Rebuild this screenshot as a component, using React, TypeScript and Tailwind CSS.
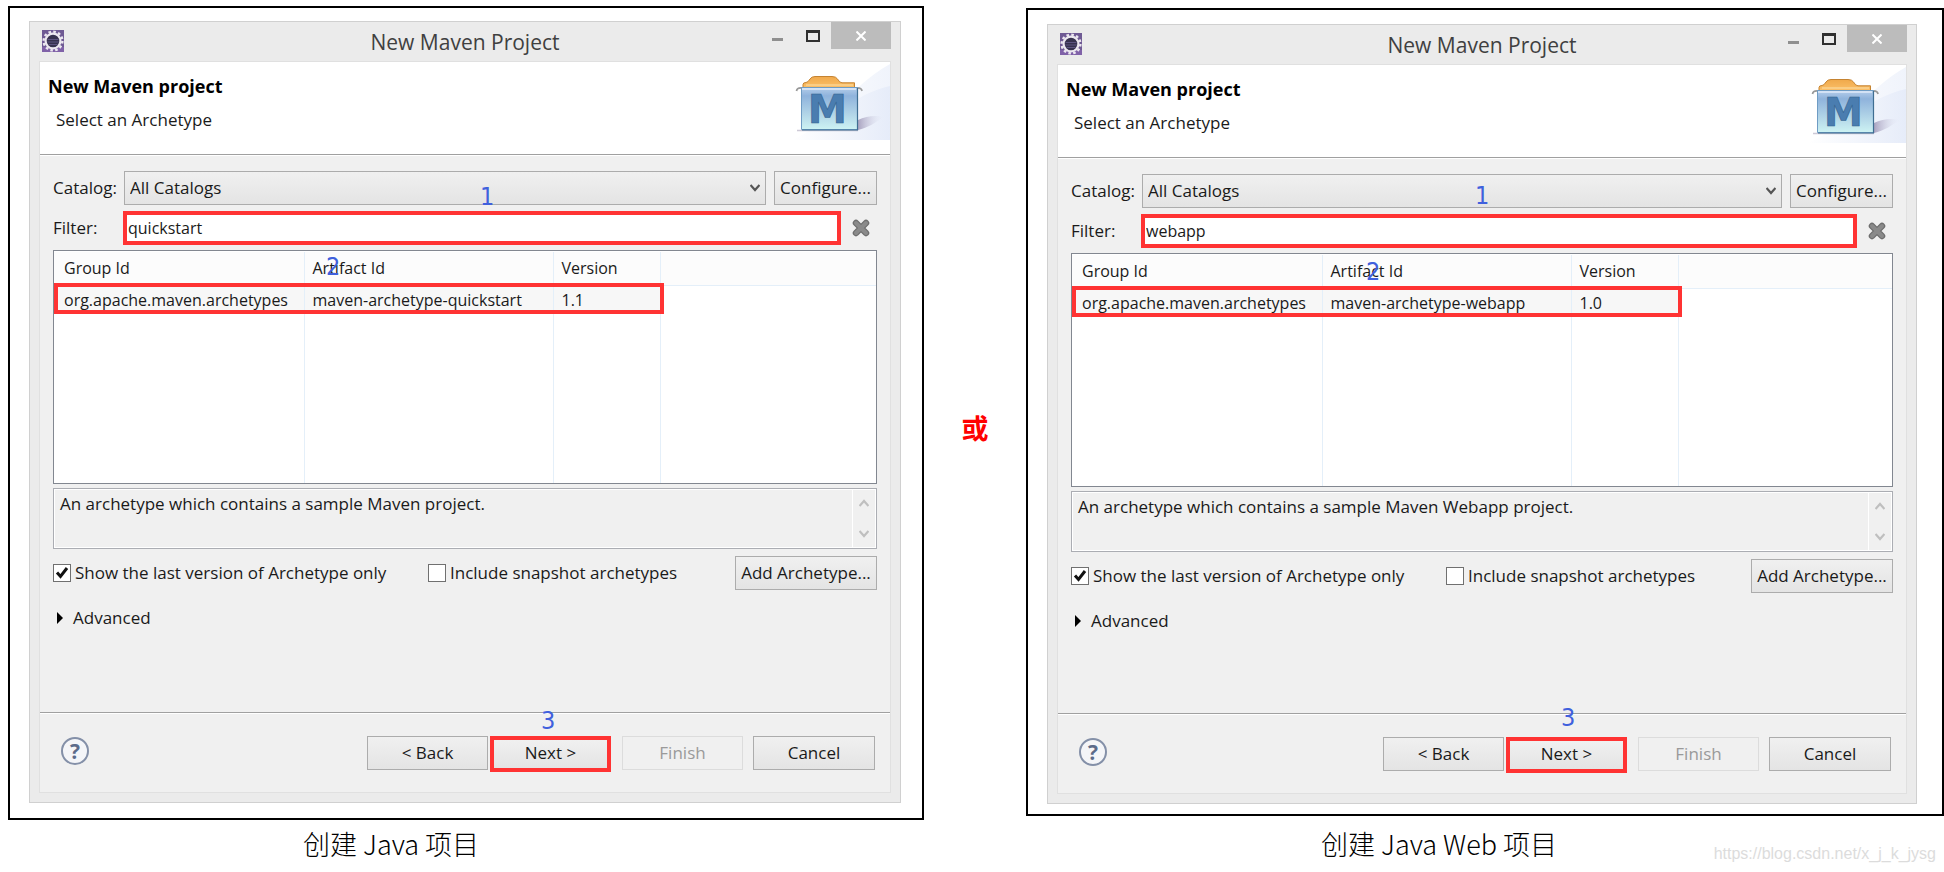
import React, { useState } from 'react';
import clsx from 'clsx';

interface Marker {
  label: string;
  place: string;
}

interface WizardProps {
  id: string;
  filter: string;
  artifactId: string;
  version: string;
  description: string;
  height: string;
  markers: Marker[];
}

const buttonClass =
  'h-[34px] border border-[#acacac] bg-linear-to-b from-[#f0f0f0] to-[#e4e4e4] text-center whitespace-nowrap';

const EclipseIcon = () => (
  <svg className="h-[22px] w-[22px]" viewBox="0 0 22 22" aria-hidden="true">
    <rect width="22" height="22" fill="#6f5a94" />
    <rect y="17" width="22" height="5" fill="#8062a8" />
    <circle cx="11" cy="11" r="9.4" fill="none" stroke="#ece8f0" strokeWidth="2.4" strokeDasharray="2.6 2.32" />
    <circle cx="11" cy="11" r="7.4" fill="#37324f" stroke="#ece8f0" strokeWidth="2.2" />
    <path d="M5.500 9.500h11M5.200 12h11.600M6.500 14.500h9" stroke="#5d5480" strokeWidth="1.200" />
  </svg>
);

const MavenBanner = ({ id }: { id: string }) => (
  <svg className="h-[78px] w-[98px] shrink-0" viewBox="0 0 98 78" aria-hidden="true">
    <defs>
      <linearGradient id={`${id}-sky`} x1="0" y1="0" x2="1" y2="0">
        <stop offset="0" stopColor="#ffffff" />
        <stop offset="1" stopColor="#e6ecf9" />
      </linearGradient>
      <linearGradient id={`${id}-box`} x1="0" y1="0" x2="0" y2="1">
        <stop offset="0" stopColor="#b4cdea" />
        <stop offset="0.2" stopColor="#8fb3dc" />
        <stop offset="0.65" stopColor="#b3d6e8" />
        <stop offset="1" stopColor="#cdf3f3" />
      </linearGradient>
      <linearGradient id={`${id}-tab`} x1="0" y1="0" x2="0" y2="1">
        <stop offset="0" stopColor="#f0a94b" />
        <stop offset="1" stopColor="#fbc069" />
      </linearGradient>
      <linearGradient id={`${id}-shade`} x1="0" y1="0" x2="1" y2="0">
        <stop offset="0" stopColor="#a9a3c0" />
        <stop offset="1" stopColor="#e6eaf7" stopOpacity="0" />
      </linearGradient>
    </defs>
    <path d="M0 78C40 66 54 26 98 2v76z" fill={`url(#${id}-sky)`} opacity="0.6" />
    <path d="M0 78C40 60 60 32 98 24v54z" fill={`url(#${id}-sky)`} />
    <path d="M66 58C74 54 84 53 92 55C84 60 76 66 66 68z" fill={`url(#${id}-shade)`} />
    <path d="M5 68.500h61" stroke="#b9b3c6" strokeWidth="1.500" opacity="0.7" />
    <path d="M11 26V22.500Q11 20.500 14 20.500Q16 20.500 18 17Q19.500 14.500 23 14.500H40Q44 14.500 45.500 17Q47.500 20.800 50 20.800H62.500V26z" fill={`url(#${id}-tab)`} stroke="#c58331" strokeWidth="1" />
    <path d="M14 23H61" stroke="#fde0a8" strokeWidth="1" />
    <path d="M4.500 29Q5 25.500 10 26M70 29Q69.500 25.500 64 26" fill="none" stroke="#9a9a9a" strokeWidth="1.800" />
    <path d="M9.500 25.500H65.500V67.500H9.500z" fill={`url(#${id}-box)`} stroke="#6f9cc4" strokeWidth="1" />
    <path d="M10 27H64" stroke="#dfeafa" strokeWidth="1.500" />
    <path d="M65.500 26V68H10" fill="none" stroke="#3f6e92" strokeWidth="1.200" />
    <text x="16" y="61" fontSize="39" fontWeight="700" className="font-['DejaVu_Sans']" fill="#4a7db0" stroke="#2f5f8e" strokeWidth="0.6">M</text>
  </svg>
);

const WizardDialog: React.FC<WizardProps> = ({
  id,
  filter,
  artifactId,
  version,
  description,
  height,
  markers,
}) => {
  const [query, setQuery] = useState(filter);
  const [lastOnly, setLastOnly] = useState(true);
  const [snapshots, setSnapshots] = useState(false);

  return (
    <section
      className={clsx(
        "relative flex flex-col border border-[#d0d0d0] bg-[#ebebeb] px-[9px] pb-[9px] font-['Open_Sans',sans-serif] text-[17px] leading-6 text-[#1a1a1a]",
        height
      )}
    >
      {/* Title bar */}
      <header className="grid h-[39px] shrink-0 grid-cols-[1fr_auto_1fr]">
        <div className="pt-2 pl-[3px]">
          <EclipseIcon />
        </div>
        <h1 className="text-[21px] leading-10 text-[#404040]">New Maven Project</h1>
        <div className="flex items-start justify-end">
          <button aria-label="Minimize" className="flex h-[27px] w-9 items-center justify-center pt-[8px]">
            <span className="h-[3px] w-[11px] bg-[#8f8f8f]" />
          </button>
          <button aria-label="Maximize" className="flex h-[27px] w-9 items-center justify-center">
            <span className="h-3 w-[14px] border-2 border-t-[3px] border-[#303030]" />
          </button>
          <button aria-label="Close" className="flex h-[27px] w-[60px] items-center justify-center bg-[#bcbcbc]">
            <svg className="h-[10px] w-[10px]" viewBox="0 0 10 10">
              <path d="M0.500 0.500L9.500 9.500M9.500 0.500L0.500 9.500" stroke="#fff" strokeWidth="2" />
            </svg>
          </button>
        </div>
      </header>

      <div className="flex flex-1 flex-col border border-[#e0e0e0] bg-[#f0f0f0]">
        {/* Wizard heading */}
        <div className="flex h-[93px] shrink-0 justify-between border-b border-[#a0a0a0] bg-white">
          <div className="pt-3 pl-2">
            <h2 className="text-lg leading-6 font-bold text-black">New Maven project</h2>
            <p className="mt-[10px] pl-2">Select an Archetype</p>
          </div>
          <MavenBanner id={id} />
        </div>

        {/* Archetype form */}
        <div className="flex flex-1 flex-col border-t border-white px-[13px] pt-[15px]">
          <div className="flex items-center">
            <label htmlFor={`${id}-catalog`} className="w-[71px] shrink-0">Catalog:</label>
            <div className="relative flex-1">
              <select
                id={`${id}-catalog`}
                className="h-[34px] w-full appearance-none border border-[#acacac] bg-linear-to-b from-[#f0f0f0] to-[#e4e4e4] pl-[5px]"
              >
                <option>All Catalogs</option>
              </select>
              <svg className="pointer-events-none absolute top-[13px] right-[6px] h-2 w-[10px]" viewBox="0 0 10 8">
                <path d="M0.500 1L5 6L9.500 1" fill="none" stroke="#555" strokeWidth="2.200" />
              </svg>
            </div>
            <button className={clsx(buttonClass, 'ml-2 w-[103px]')}>Configure...</button>
          </div>

          <div className="mt-[6px] flex items-center">
            <label htmlFor={`${id}-filter`} className="w-[70px] shrink-0">Filter:</label>
            <input
              id={`${id}-filter`}
              type="text"
              value={query}
              onChange={(e) => setQuery(e.target.value)}
              className="h-[34px] min-w-0 flex-1 border-4 border-[#ff3333] bg-white pl-px text-base outline-none"
            />
            <button aria-label="Clear filter" onClick={() => setQuery('')} className="flex w-9 justify-center pl-1">
              <svg className="h-[18px] w-[18px]" viewBox="0 0 18 18">
                <path d="M4 4L14 14M14 4L4 14" stroke="#6e6e6e" strokeWidth="6.500" strokeLinecap="round" />
                <path d="M4 4L14 14M14 4L4 14" stroke="#8a8a8a" strokeWidth="4" strokeLinecap="round" />
              </svg>
            </button>
          </div>

          <div className="relative mt-[5px] h-[234px] shrink-0 border border-[#828790] bg-white pt-px text-base">
            <table className="h-full w-full table-fixed border-collapse text-left">
              <colgroup>
                <col className="w-[250px]" />
                <col className="w-[249px]" />
                <col className="w-[107px]" />
                <col />
              </colgroup>
              <thead>
                <tr className="h-[33px] border-b border-[#e4eff9] bg-[#fcfcfc]">
                  <th className="border-r border-[#e4eff9] py-0 pl-[10px] font-normal">Group Id</th>
                  <th className="border-r border-[#e4eff9] py-0 pl-2 font-normal">Artifact Id</th>
                  <th className="border-r border-[#e4eff9] py-0 pl-2 font-normal">Version</th>
                  <th />
                </tr>
              </thead>
              <tbody>
                <tr className="h-[29px]">
                  <td className="border-r border-[#e4eff9] bg-[#f7f7f7] py-0 pl-[10px]">org.apache.maven.archetypes</td>
                  <td className="border-r border-[#e4eff9] bg-[#f7f7f7] py-0 pl-2">{artifactId}</td>
                  <td className="border-r border-[#e4eff9] bg-[#f7f7f7] py-0 pl-2">{version}</td>
                  <td />
                </tr>
                <tr>
                  <td className="border-r border-[#e4eff9]" />
                  <td className="border-r border-[#e4eff9]" />
                  <td className="border-r border-[#e4eff9]" />
                  <td />
                </tr>
              </tbody>
            </table>
            <div className="pointer-events-none absolute top-8 left-0 h-[31px] w-[610px] border-4 border-[#ff3333]" />
          </div>

          <div className="mt-1 flex h-[61px] shrink-0 border border-[#abadb3] p-px outline-1 -outline-offset-2 outline-white">
            <p className="flex-1 pl-[5px] leading-7">{description}</p>
            <div className="flex w-[23px] flex-col items-center justify-between border-l border-white py-[9px]">
              <svg className="h-2 w-[10px]" viewBox="0 0 10 8">
                <path d="M0.500 7L5 2L9.500 7" fill="none" stroke="#bfbfbf" strokeWidth="2.200" />
              </svg>
              <svg className="h-2 w-[10px]" viewBox="0 0 10 8">
                <path d="M0.500 1L5 6L9.500 1" fill="none" stroke="#bfbfbf" strokeWidth="2.200" />
              </svg>
            </div>
          </div>

          <div className="mt-[7px] flex items-center">
            <label className="flex w-[375px] items-center gap-1">
              <span className="relative h-[18px] w-[18px]">
                <input
                  type="checkbox"
                  checked={lastOnly}
                  onChange={(e) => setLastOnly(e.target.checked)}
                  className="block h-[18px] w-[18px] appearance-none border border-[#707070] bg-white"
                />
                {lastOnly && (
                  <svg className="pointer-events-none absolute inset-0" viewBox="0 0 18 18">
                    <path d="M4 8.500L7.500 12.500L14 4" fill="none" stroke="#111" strokeWidth="3" />
                  </svg>
                )}
              </span>
              Show the last version of Archetype only
            </label>
            <label className="flex items-center gap-1">
              <input
                type="checkbox"
                checked={snapshots}
                onChange={(e) => setSnapshots(e.target.checked)}
                className="h-[18px] w-[18px] appearance-none border border-[#707070] bg-white"
              />
              Include snapshot archetypes
            </label>
            <button className={clsx(buttonClass, 'ml-auto w-[142px]')}>Add Archetype...</button>
          </div>

          <button className="mt-4 flex items-center gap-[10px] self-start pl-1">
            <svg className="h-3 w-[6px]" viewBox="0 0 6 12">
              <path d="M0 0L6 6L0 12z" fill="#000" />
            </svg>
            Advanced
          </button>
        </div>

        {/* Wizard buttons */}
        <footer className="flex h-[80px] shrink-0 items-start border-t border-[#a0a0a0] pr-[15px] pl-[21px] shadow-[inset_0_1px_0_#fff]">
          <button
            aria-label="Help"
            className="mt-6 h-7 w-7 rounded-full border-2 border-[#8490a8] bg-[#f4f5f8] text-center text-[21px] leading-6 font-bold text-[#5c6b8a]"
          >
            ?
          </button>
          <div className="mt-[23px] ml-auto flex">
            <button className={clsx(buttonClass, 'w-[121px]')}>&lt; Back</button>
            <button className="ml-[2px] h-9 w-[121px] border-4 border-[#ff3333] bg-linear-to-b from-[#f0f0f0] to-[#e4e4e4] pb-[2px]">
              Next &gt;
            </button>
            <button disabled className="ml-[11px] h-[34px] w-[121px] border border-[#dcdcdc] text-[#9a9a9a]">
              Finish
            </button>
            <button className={clsx(buttonClass, 'ml-[10px] w-[122px]')}>Cancel</button>
          </div>
        </footer>
      </div>

      {/* Step numbers drawn over the dialog */}
      {markers.map((marker) => (
        <span
          key={marker.label}
          className={clsx(
            "pointer-events-none absolute font-['DejaVu_Sans_Condensed','DejaVu_Sans'] text-[25px] leading-6 text-[#4060dd]",
            marker.place
          )}
        >
          {marker.label}
        </span>
      ))}
    </section>
  );
};

const captionClass =
  "pl-[295px] text-[27px] leading-9 font-light text-black font-['Noto_Sans_CJK_SC',sans-serif]";

const App = () => {
  return (
    <main className="relative flex min-h-screen bg-white pl-2">
      <figure className="flex flex-[916] flex-col justify-between pt-[6px] pb-[10px]">
        <div className="border-2 border-black pt-[13px] pr-[21px] pb-[15px] pl-[19px]">
          <WizardDialog
            id="java"
            filter="quickstart"
            artifactId="maven-archetype-quickstart"
            version="1.1"
            description="An archetype which contains a sample Maven project."
            height="min-h-[782px]"
            markers={[
              { label: '1', place: 'top-[163px] left-[450px]' },
              { label: '2', place: 'top-[233px] left-[296px]' },
              { label: '3', place: 'top-[687px] left-[511px]' },
            ]}
          />
        </div>
        <figcaption className={captionClass}>创建 Java 项目</figcaption>
      </figure>

      <div className="flex w-[102px] shrink-0 items-center justify-center pb-4">
        <strong className="font-['Noto_Sans_CJK_SC',sans-serif] text-[27px] leading-9 font-bold text-[#ff0000]">或</strong>
      </div>

      <figure className="flex flex-[918] flex-col justify-between pt-2 pb-[10px]">
        <div className="border-2 border-black pt-[14px] pr-[25px] pb-[10px] pl-[19px]">
          <WizardDialog
            id="web"
            filter="webapp"
            artifactId="maven-archetype-webapp"
            version="1.0"
            description="An archetype which contains a sample Maven Webapp project."
            height="min-h-[780px]"
            markers={[
              { label: '1', place: 'top-[159px] left-[427px]' },
              { label: '2', place: 'top-[235px] left-[318px]' },
              { label: '3', place: 'top-[681px] left-[513px]' },
            ]}
          />
        </div>
        <figcaption className={captionClass}>创建 Java Web 项目</figcaption>
      </figure>

      <span className="absolute right-2 bottom-2 font-['Liberation_Sans',sans-serif] text-base leading-5 text-[#dcdcdc]">
        https://blog.csdn.net/x_j_k_jysg
      </span>
    </main>
  );
};

export default App;
